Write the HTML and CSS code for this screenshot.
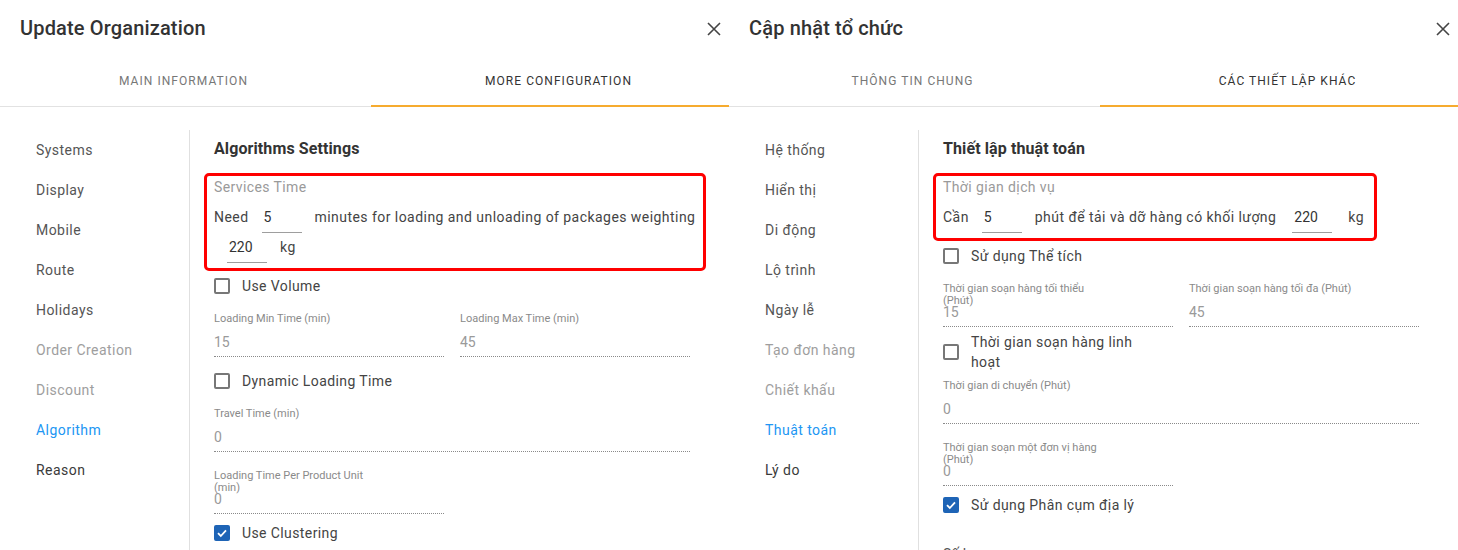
FILE: index.html
```html
<!DOCTYPE html>
<html lang="vi">
<head>
<meta charset="utf-8">
<title>Update Organization</title>
<link rel="stylesheet" href="styles.css">
</head>
<body>
<div class="page">
  <div class="panel">
    <div class="header">
      <div class="title">Update Organization</div>
      <button class="close" aria-label="Close"><svg width="14" height="14" viewBox="0 0 14 14"><path d="M1 1L13 13M13 1L1 13" stroke="#444" stroke-width="1.6" fill="none"/></svg></button>
    </div>
    <div class="tabs">
      <div class="tab">Main Information</div>
      <div class="tab active">More Configuration</div>
    </div>
    <div class="body">
      <nav class="nav">
        <div class="nav-item">Systems</div>
        <div class="nav-item">Display</div>
        <div class="nav-item">Mobile</div>
        <div class="nav-item">Route</div>
        <div class="nav-item">Holidays</div>
        <div class="nav-item muted">Order Creation</div>
        <div class="nav-item muted">Discount</div>
        <div class="nav-item current">Algorithm</div>
        <div class="nav-item dark">Reason</div>
      </nav>
      <section class="content">
        <h2 class="heading">Algorithms Settings</h2>
        <div class="svc-box wrap">
          <div class="svc-label">Services Time</div>
          <div class="svc-row">
            <span class="svc-text">Need</span>
            <span class="svc-input">5</span>
            <span class="svc-text">minutes for loading and unloading of packages weighting</span>
            <span class="svc-input">220</span>
            <span class="svc-text">kg</span>
          </div>
        </div>
        <div class="check"><span class="box"></span><span class="check-text">Use Volume</span></div>
        <div class="grid2 after-check">
          <div class="field"><div class="field-label">Loading Min Time (min)</div><div class="field-value">15</div></div>
          <div class="field"><div class="field-label">Loading Max Time (min)</div><div class="field-value">45</div></div>
        </div>
        <div class="check after-field"><span class="box"></span><span class="check-text">Dynamic Loading Time</span></div>
        <div class="field after-check-2"><div class="field-label">Travel Time (min)</div><div class="field-value">0</div></div>
        <div class="grid2 after-full">
          <div class="field"><div class="field-label">Loading Time Per Product Unit (min)</div><div class="field-value">0</div></div>
        </div>
        <div class="check checked tight"><span class="box"><svg width="12" height="12" viewBox="0 0 12 12"><path d="M2 6.2L4.8 9L10 3.4" stroke="#fff" stroke-width="1.8" fill="none"/></svg></span><span class="check-text">Use Clustering</span></div>
        <div class="next-text">Cluster count</div>
      </section>
    </div>
  </div>

  <div class="panel">
    <div class="header">
      <div class="title">Cập nhật tổ chức</div>
      <button class="close" aria-label="Đóng"><svg width="14" height="14" viewBox="0 0 14 14"><path d="M1 1L13 13M13 1L1 13" stroke="#444" stroke-width="1.6" fill="none"/></svg></button>
    </div>
    <div class="tabs">
      <div class="tab">Thông tin chung</div>
      <div class="tab active">Các thiết lập khác</div>
    </div>
    <div class="body">
      <nav class="nav">
        <div class="nav-item">Hệ thống</div>
        <div class="nav-item">Hiển thị</div>
        <div class="nav-item">Di động</div>
        <div class="nav-item">Lộ trình</div>
        <div class="nav-item">Ngày lễ</div>
        <div class="nav-item muted">Tạo đơn hàng</div>
        <div class="nav-item muted">Chiết khấu</div>
        <div class="nav-item current">Thuật toán</div>
        <div class="nav-item dark">Lý do</div>
      </nav>
      <section class="content">
        <h2 class="heading">Thiết lập thuật toán</h2>
        <div class="svc-box">
          <div class="svc-label">Thời gian dịch vụ</div>
          <div class="svc-row">
            <span class="svc-text">Cần</span>
            <span class="svc-input">5</span>
            <span class="svc-text">phút để tải và dỡ hàng có khối lượng</span>
            <span class="svc-input wide-gap">220</span>
            <span class="svc-text">kg</span>
          </div>
        </div>
        <div class="check"><span class="box"></span><span class="check-text">Sử dụng Thể tích</span></div>
        <div class="grid2 after-check">
          <div class="field"><div class="field-label">Thời gian soạn hàng tối thiểu (Phút)</div><div class="field-value">15</div></div>
          <div class="field"><div class="field-label">Thời gian soạn hàng tối đa (Phút)</div><div class="field-value">45</div></div>
        </div>
        <div class="check after-field"><span class="box"></span><span class="check-text">Thời gian soạn hàng linh hoạt</span></div>
        <div class="field after-check-2"><div class="field-label">Thời gian di chuyển (Phút)</div><div class="field-value">0</div></div>
        <div class="grid2 after-full">
          <div class="field"><div class="field-label">Thời gian soạn một đơn vị hàng (Phút)</div><div class="field-value">0</div></div>
        </div>
        <div class="check checked tight"><span class="box"><svg width="12" height="12" viewBox="0 0 12 12"><path d="M2 6.2L4.8 9L10 3.4" stroke="#fff" stroke-width="1.8" fill="none"/></svg></span><span class="check-text">Sử dụng Phân cụm địa lý</span></div>
        <div class="next-text">Số lượng cụm</div>
      </section>
    </div>
  </div>
</div>
</body>
</html>
```
FILE: styles.css
```css
* { box-sizing: border-box; }
html, body { margin: 0; padding: 0; background: #fff; }
body {
  font-family: Roboto, "Liberation Sans", Arial, sans-serif;
  color: #333;
  overflow: hidden;
}
.page {
  display: flex;
  width: 1458px;
  height: 550px;
  overflow: hidden;
}
.panel {
  width: 729px;
  flex: 0 0 729px;
  display: flex;
  flex-direction: column;
  height: 550px;
  overflow: hidden;
}
.header {
  flex: 0 0 56px;
  height: 56px;
  display: flex;
  align-items: center;
  justify-content: space-between;
  padding: 0 1px 0 20px;
}
.title {
  font-size: 20px;
  font-weight: 500;
  color: #333;
  letter-spacing: 0.15px;
}
.close {
  width: 28px;
  height: 28px;
  border: 0;
  background: transparent;
  padding: 0;
  display: flex;
  align-items: center;
  justify-content: center;
  margin-top: 2px;
}
.tabs {
  flex: 0 0 51px;
  height: 51px;
  display: flex;
  border-bottom: 1px solid #e2e2e2;
}
.tab {
  flex: 0 0 367px;
  display: flex;
  align-items: center;
  justify-content: center;
  font-size: 12px;
  text-transform: uppercase;
  letter-spacing: 1.05px;
  color: #777;
  font-weight: 400;
}
.tab.active {
  flex: 1 1 auto;
  margin-left: 4px;
  padding-left: 17px;
  color: #333;
  border-bottom: 2px solid #f6ab2f;
  margin-bottom: -1px;
}
.body {
  flex: 1 1 auto;
  min-height: 0;
  overflow: hidden;
  display: flex;
  padding-top: 23px;
}
.nav {
  width: 190px;
  flex: 0 0 190px;
  border-right: 1px solid #e0e0e0;
  padding-left: 36px;
}
.nav-item {
  height: 40px;
  line-height: 40px;
  font-size: 14px;
  color: #555;
  letter-spacing: 0.45px;
}
.nav-item.muted { color: #9e9e9e; }
.nav-item.current { color: #2196f3; }
.nav-item.dark { color: #3a3a3a; }
.content {
  width: 500px;
  flex: 0 0 500px;
  padding-left: 24px;
}
.heading {
  margin: 9px 0 0;
  font-size: 16px;
  line-height: 20px;
  font-weight: 700;
  color: #333;
  letter-spacing: 0.1px;
}
.svc-box {
  margin-top: 14px;
  margin-left: -10px;
  margin-bottom: -6px;
  width: fit-content;
  border: 3px solid #f00;
  border-radius: 5px;
  padding: 3px 10px 5px 7px;
}
.svc-box.wrap {
  width: 502px;
  padding-right: 0;
}
.svc-label {
  font-size: 14px;
  line-height: 16px;
  color: #9a9a9a;
  letter-spacing: 0.4px;
}
.svc-row {
  margin-top: 10px;
  display: flex;
  flex-wrap: wrap;
  align-items: baseline;
  row-gap: 2px;
}
.svc-text {
  font-size: 14px;
  line-height: 16px;
  color: #444;
  letter-spacing: 0.45px;
}
.svc-input {
  width: 40px;
  height: 28px;
  margin: 0 13px;
  padding: 4px 0 0 2px;
  font-size: 14px;
  line-height: 16px;
  color: #333;
  border-bottom: 1px solid #9e9e9e;
}
.svc-input.wide-gap { margin: 0 16px; }
.check {
  display: flex;
  align-items: center;
  gap: 12px;
  min-height: 42px;
  max-width: 200px;
  padding: 2px 0;
}
.check .box {
  flex: 0 0 16px;
  width: 16px;
  height: 16px;
  border: 2px solid #777;
  border-radius: 2px;
  display: flex;
  align-items: center;
  justify-content: center;
}
.check.checked .box {
  background: #1e64b6;
  border-color: #1e64b6;
}
.check-text {
  font-size: 14px;
  line-height: 20px;
  color: #444;
  letter-spacing: 0.4px;
}
.grid2 {
  display: grid;
  grid-template-columns: 230px 230px;
  column-gap: 16px;
}
.field {
  display: grid;
  grid-template-rows: 12px auto;
  padding-bottom: 6px;
  border-bottom: 1px dotted #8a8a8a;
}
.field-label {
  font-size: 11px;
  line-height: 12px;
  color: #8a8a8a;
  max-width: 164px;
}
.field-value {
  margin-top: 9px;
  font-size: 14px;
  line-height: 16px;
  color: #9a9a9a;
}
.after-check { margin-top: 6px; }
.after-field { margin-top: 3px; }
.after-check-2 { margin-top: 6px; width: 476px; }
.after-full { margin-top: 18px; }
.tight { margin-top: -2px; }
.next-text {
  margin-top: 18px;
  font-size: 14px;
  line-height: 20px;
  color: #555;
}
```
